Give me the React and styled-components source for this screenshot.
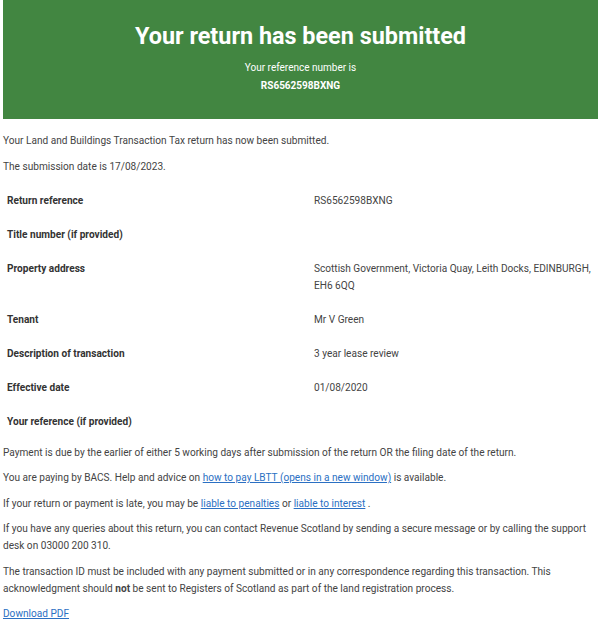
import styled, { createGlobalStyle } from 'styled-components';

const GlobalStyle = createGlobalStyle`
    body {
        margin: 0;
        background: #ffffff;
        font-family: Roboto, "Liberation Sans", sans-serif;
        color: #444444;
    }
`;

const Page = styled.div`
    width: 602px;
    padding: 0 3px;
    box-sizing: border-box;
    font-size: 10.1px;
    line-height: 17px;
`;

const Banner = styled.div`
    background: #428641;
    color: #ffffff;
    text-align: center;
    padding: 20px 0 24px;
    margin: 0 1px 13px 0;
`;

const Title = styled.h1`
    margin: 0 0 7px;
    font-size: 23.4px;
    line-height: 32px;
    font-weight: 700;
`;

const BannerLine = styled.div`
    font-size: 10px;
    line-height: 18px;
    font-weight: ${(props) => (props.bold ? 700 : 400)};
`;

const Para = styled.p`
    margin: 8.5px 0;
`;

const Table = styled.div`
    margin: 8px 0 -3px;
`;

const Row = styled.div`
    display: grid;
    grid-template-columns: 307px 1fr;
    padding: 8.5px 4px;
`;

const Label = styled.div`
    font-weight: 700;
    color: #333333;
`;

const Value = styled.div``;

const Link = styled.a`
    color: #2b70c3;
    text-decoration: underline;
`;

const rows = [
    ['Return reference', 'RS6562598BXNG'],
    ['Title number (if provided)', ''],
    ['Property address', 'Scottish Government, Victoria Quay, Leith Docks, EDINBURGH, EH6 6QQ'],
    ['Tenant', 'Mr V Green'],
    ['Description of transaction', '3 year lease review'],
    ['Effective date', '01/08/2020'],
    ['Your reference (if provided)', ''],
];

export default function App() {
    return (
        <>
            <GlobalStyle />
            <Page>
                <Banner>
                    <Title>Your return has been submitted</Title>
                    <BannerLine>Your reference number is</BannerLine>
                    <BannerLine bold>RS6562598BXNG</BannerLine>
                </Banner>
                <Para>Your Land and Buildings Transaction Tax return has now been submitted.</Para>
                <Para>The submission date is 17/08/2023.</Para>
                <Table>
                    {rows.map(([label, value]) => (
                        <Row key={label}>
                            <Label>{label}</Label>
                            <Value>{value}</Value>
                        </Row>
                    ))}
                </Table>
                <Para>
                    Payment is due by the earlier of either 5 working days after submission of the return OR the filing date of the return.
                </Para>
                <Para>
                    You are paying by BACS. Help and advice on <Link href="#">how to pay LBTT (opens in a new window)</Link> is available.
                </Para>
                <Para>
                    If your return or payment is late, you may be <Link href="#">liable to penalties</Link> or{' '}
                    <Link href="#">liable to interest</Link> .
                </Para>
                <Para>
                    If you have any queries about this return, you can contact Revenue Scotland by sending a secure message or by calling the support desk on 03000 200 310.
                </Para>
                <Para>
                    The transaction ID must be included with any payment submitted or in any correspondence regarding this transaction. This acknowledgment should <b>not</b> be sent to Registers of Scotland as part of the land registration process.
                </Para>
                <Para>
                    <Link href="#">Download PDF</Link>
                </Para>
            </Page>
        </>
    );
}
